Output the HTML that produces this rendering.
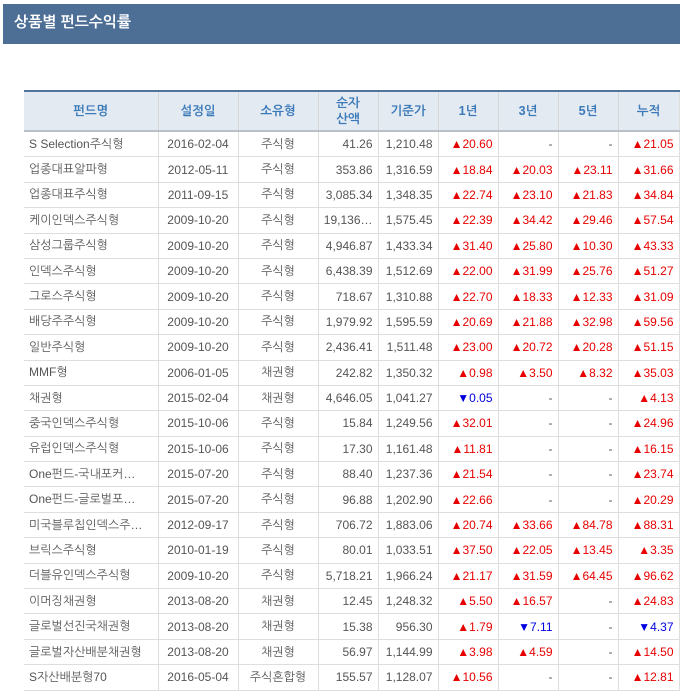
<!DOCTYPE html>
<html><head><meta charset="utf-8"><style>
body{margin:0;background:#fff;width:680px;height:691px;overflow:hidden;position:relative;font-family:"Liberation Sans","NanumGothic","Noto Sans CJK KR",sans-serif;}
.hd{position:absolute;left:3px;top:4px;width:677px;height:40px;background:#4d6f96;color:#fff;font-size:15px;font-weight:bold;line-height:38px;}
.hd span{padding-left:11px;}
table{position:absolute;left:24px;top:90px;border-collapse:collapse;table-layout:fixed;width:655px;font-size:12px;color:#555;}
th{background:#e4eaf2;color:#3a7ab8;font-weight:bold;font-size:12.5px;height:38px;border-top:2px solid #52739a;border-left:1px solid #d6d6d6;border-bottom:2px solid #b9bfc7;line-height:16px;padding:0;}
td{height:24.4px;border-left:1px solid #dedede;border-bottom:1px solid #dedede;padding:0 5px;white-space:nowrap;overflow:hidden;}
tr>*:first-child{border-left:none}
tr>*:last-child{border-right:1px solid #dedede}
td.l{text-align:left}
td.c{text-align:center}
td.r{text-align:right}
.u{color:#e80000}.d{color:#0000e0}
</style></head><body>
<div class="hd"><span>상품별 펀드수익률</span></div>
<table>
<colgroup><col style="width:134px"><col style="width:80px"><col style="width:80px"><col style="width:60px"><col style="width:60px"><col style="width:60px"><col style="width:60px"><col style="width:60px"><col style="width:61px"></colgroup>
<tr><th>펀드명</th><th>설정일</th><th>소유형</th><th>순자<br>산액</th><th>기준가</th><th>1년</th><th>3년</th><th>5년</th><th>누적</th></tr>
<tr><td class="l">S Selection주식형</td><td class="c">2016-02-04</td><td class="c">주식형</td><td class="r">41.26</td><td class="r">1,210.48</td><td class="r u">▲20.60</td><td class="r">-</td><td class="r">-</td><td class="r u">▲21.05</td></tr>
<tr><td class="l">업종대표알파형</td><td class="c">2012-05-11</td><td class="c">주식형</td><td class="r">353.86</td><td class="r">1,316.59</td><td class="r u">▲18.84</td><td class="r u">▲20.03</td><td class="r u">▲23.11</td><td class="r u">▲31.66</td></tr>
<tr><td class="l">업종대표주식형</td><td class="c">2011-09-15</td><td class="c">주식형</td><td class="r">3,085.34</td><td class="r">1,348.35</td><td class="r u">▲22.74</td><td class="r u">▲23.10</td><td class="r u">▲21.83</td><td class="r u">▲34.84</td></tr>
<tr><td class="l">케이인덱스주식형</td><td class="c">2009-10-20</td><td class="c">주식형</td><td class="r">19,136…</td><td class="r">1,575.45</td><td class="r u">▲22.39</td><td class="r u">▲34.42</td><td class="r u">▲29.46</td><td class="r u">▲57.54</td></tr>
<tr><td class="l">삼성그룹주식형</td><td class="c">2009-10-20</td><td class="c">주식형</td><td class="r">4,946.87</td><td class="r">1,433.34</td><td class="r u">▲31.40</td><td class="r u">▲25.80</td><td class="r u">▲10.30</td><td class="r u">▲43.33</td></tr>
<tr><td class="l">인덱스주식형</td><td class="c">2009-10-20</td><td class="c">주식형</td><td class="r">6,438.39</td><td class="r">1,512.69</td><td class="r u">▲22.00</td><td class="r u">▲31.99</td><td class="r u">▲25.76</td><td class="r u">▲51.27</td></tr>
<tr><td class="l">그로스주식형</td><td class="c">2009-10-20</td><td class="c">주식형</td><td class="r">718.67</td><td class="r">1,310.88</td><td class="r u">▲22.70</td><td class="r u">▲18.33</td><td class="r u">▲12.33</td><td class="r u">▲31.09</td></tr>
<tr><td class="l">배당주주식형</td><td class="c">2009-10-20</td><td class="c">주식형</td><td class="r">1,979.92</td><td class="r">1,595.59</td><td class="r u">▲20.69</td><td class="r u">▲21.88</td><td class="r u">▲32.98</td><td class="r u">▲59.56</td></tr>
<tr><td class="l">일반주식형</td><td class="c">2009-10-20</td><td class="c">주식형</td><td class="r">2,436.41</td><td class="r">1,511.48</td><td class="r u">▲23.00</td><td class="r u">▲20.72</td><td class="r u">▲20.28</td><td class="r u">▲51.15</td></tr>
<tr><td class="l">MMF형</td><td class="c">2006-01-05</td><td class="c">채권형</td><td class="r">242.82</td><td class="r">1,350.32</td><td class="r u">▲0.98</td><td class="r u">▲3.50</td><td class="r u">▲8.32</td><td class="r u">▲35.03</td></tr>
<tr><td class="l">채권형</td><td class="c">2015-02-04</td><td class="c">채권형</td><td class="r">4,646.05</td><td class="r">1,041.27</td><td class="r d">▼0.05</td><td class="r">-</td><td class="r">-</td><td class="r u">▲4.13</td></tr>
<tr><td class="l">중국인덱스주식형</td><td class="c">2015-10-06</td><td class="c">주식형</td><td class="r">15.84</td><td class="r">1,249.56</td><td class="r u">▲32.01</td><td class="r">-</td><td class="r">-</td><td class="r u">▲24.96</td></tr>
<tr><td class="l">유럽인덱스주식형</td><td class="c">2015-10-06</td><td class="c">주식형</td><td class="r">17.30</td><td class="r">1,161.48</td><td class="r u">▲11.81</td><td class="r">-</td><td class="r">-</td><td class="r u">▲16.15</td></tr>
<tr><td class="l">One펀드-국내포커…</td><td class="c">2015-07-20</td><td class="c">주식형</td><td class="r">88.40</td><td class="r">1,237.36</td><td class="r u">▲21.54</td><td class="r">-</td><td class="r">-</td><td class="r u">▲23.74</td></tr>
<tr><td class="l">One펀드-글로벌포…</td><td class="c">2015-07-20</td><td class="c">주식형</td><td class="r">96.88</td><td class="r">1,202.90</td><td class="r u">▲22.66</td><td class="r">-</td><td class="r">-</td><td class="r u">▲20.29</td></tr>
<tr><td class="l">미국블루칩인덱스주…</td><td class="c">2012-09-17</td><td class="c">주식형</td><td class="r">706.72</td><td class="r">1,883.06</td><td class="r u">▲20.74</td><td class="r u">▲33.66</td><td class="r u">▲84.78</td><td class="r u">▲88.31</td></tr>
<tr><td class="l">브릭스주식형</td><td class="c">2010-01-19</td><td class="c">주식형</td><td class="r">80.01</td><td class="r">1,033.51</td><td class="r u">▲37.50</td><td class="r u">▲22.05</td><td class="r u">▲13.45</td><td class="r u">▲3.35</td></tr>
<tr><td class="l">더블유인덱스주식형</td><td class="c">2009-10-20</td><td class="c">주식형</td><td class="r">5,718.21</td><td class="r">1,966.24</td><td class="r u">▲21.17</td><td class="r u">▲31.59</td><td class="r u">▲64.45</td><td class="r u">▲96.62</td></tr>
<tr><td class="l">이머징채권형</td><td class="c">2013-08-20</td><td class="c">채권형</td><td class="r">12.45</td><td class="r">1,248.32</td><td class="r u">▲5.50</td><td class="r u">▲16.57</td><td class="r">-</td><td class="r u">▲24.83</td></tr>
<tr><td class="l">글로벌선진국채권형</td><td class="c">2013-08-20</td><td class="c">채권형</td><td class="r">15.38</td><td class="r">956.30</td><td class="r u">▲1.79</td><td class="r d">▼7.11</td><td class="r">-</td><td class="r d">▼4.37</td></tr>
<tr><td class="l">글로벌자산배분채권형</td><td class="c">2013-08-20</td><td class="c">채권형</td><td class="r">56.97</td><td class="r">1,144.99</td><td class="r u">▲3.98</td><td class="r u">▲4.59</td><td class="r">-</td><td class="r u">▲14.50</td></tr>
<tr><td class="l">S자산배분형70</td><td class="c">2016-05-04</td><td class="c">주식혼합형</td><td class="r">155.57</td><td class="r">1,128.07</td><td class="r u">▲10.56</td><td class="r">-</td><td class="r">-</td><td class="r u">▲12.81</td></tr>
</table>
</body></html>
